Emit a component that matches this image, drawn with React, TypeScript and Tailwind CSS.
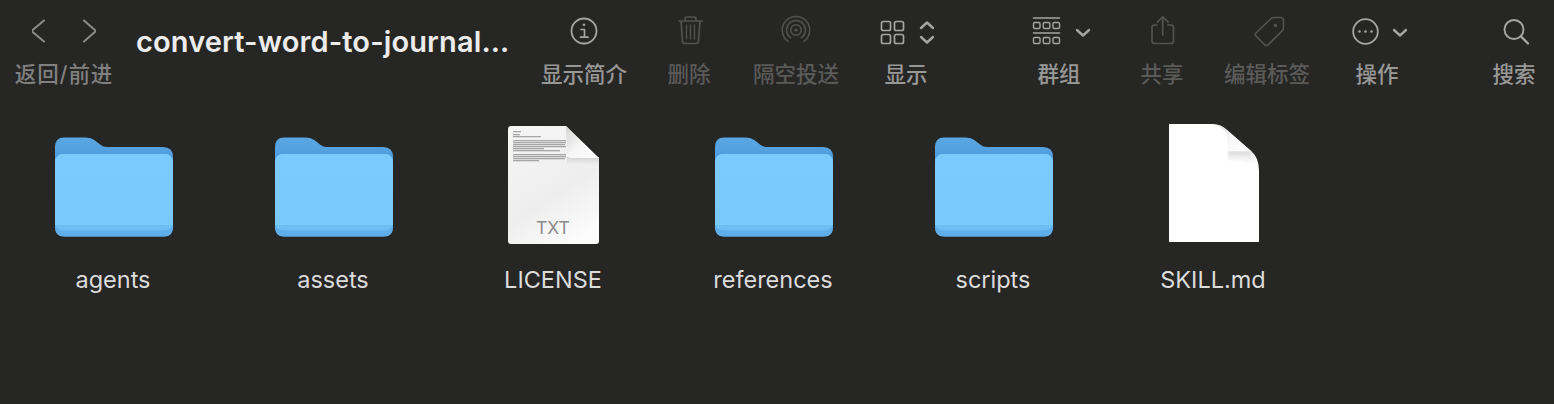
import type { ReactNode } from "react";

// icons are drawn in page coordinates: the viewBox is a 64x32 window around the label's centre
const Glyph = ({ cx, children }: { cx: number; children: ReactNode }) => (
  <svg
    width="64"
    height="32"
    viewBox={`${cx - 32} 15 64 32`}
    fill="none"
    stroke="currentColor"
    strokeLinecap="round"
    strokeLinejoin="round"
    className="shrink-0"
  >
    {children}
  </svg>
);

interface ToolProps {
  label: string;
  cx: number;
  disabled?: boolean;
  className: string;
  children: ReactNode;
}

const Tool = ({ label, cx, disabled, className, children }: ToolProps) => (
  <div className={`flex shrink-0 flex-col items-center ${className}`}>
    <div className={`flex h-8 w-full justify-center ${disabled ? "text-[#525251]" : "text-[#a5a5a4]"}`}>
      <Glyph cx={cx}>{children}</Glyph>
    </div>
    <span
      className={`mt-[11px] text-[21.5px] leading-[32px] font-medium whitespace-nowrap ${disabled ? "text-[#5a5a59]" : "text-[#989897]"}`}
    >
      {label}
    </span>
  </div>
);

const Folder = () => (
  <svg width="124" height="124" viewBox="0 0 124 124">
    <defs>
      <linearGradient id="folderBack" x1="0" y1="0" x2="0" y2="1">
        <stop offset="0" stopColor="#5aa7e3" />
        <stop offset="0.3" stopColor="#4a98da" />
        <stop offset="1" stopColor="#4a98da" />
      </linearGradient>
      <linearGradient id="folderFront" x1="0" y1="0" x2="0" y2="1">
        <stop offset="0" stopColor="#7ccbfe" />
        <stop offset="1" stopColor="#79c9fc" />
      </linearGradient>
    </defs>
    <path
      d="M4 25Q4 15.500 13 15.500H35Q40 15.500 44 18.500L49 22.500Q52 25 56 25H112Q122 25 122 35V105Q122 114.500 113 114.500H13Q4 114.500 4 105Z"
      fill="url(#folderBack)"
    />
    <path d="M4 105V41Q4 32 13 32H113Q122 32 122 41V105Q122 114.500 113 114.500H13Q4 114.500 4 105Z" fill="#5fade9" />
    <path d="M4 100V41Q4 32 13 32H113Q122 32 122 41V100Q122 108.500 113 108.500H13Q4 108.500 4 100Z" fill="#6fbdf5" />
    <path d="M4 103V41Q4 32 13 32H113Q122 32 122 41V103H4Z" fill="url(#folderFront)" />
  </svg>
);

const textLines = [
  [5, 8], [8, 7], [10, 28], [14, 53], [16, 53], [18, 52], [20, 53], [22, 31], [24, 47], [28, 53], [30, 53], [32, 52], [34, 26],
];

const TxtFile = () => (
  <svg width="124" height="124" viewBox="0 0 124 124">
    <defs>
      <linearGradient id="txtPage" x1="0.2" y1="0" x2="0.7" y2="1">
        <stop offset="0" stopColor="#f5f5f5" />
        <stop offset="0.6" stopColor="#eeeeee" />
        <stop offset="1" stopColor="#fcfcfc" />
      </linearGradient>
      <linearGradient id="txtFold" x1="0" y1="0" x2="1" y2="1">
        <stop offset="0" stopColor="#d2d2d2" />
        <stop offset="0.5" stopColor="#f6f6f6" />
        <stop offset="1" stopColor="#ffffff" />
      </linearGradient>
      <linearGradient id="txtShade" x1="0" y1="0" x2="0" y2="1">
        <stop offset="0" stopColor="#cfcfcf" />
        <stop offset="1" stopColor="#efefef" stopOpacity="0" />
      </linearGradient>
      <filter id="txtBlur">
        <feGaussianBlur stdDeviation="0.45" />
      </filter>
    </defs>
    <path d="M17 7Q17 4 20 4H75L108 37V119Q108 122 105 122H20Q17 122 17 119Z" fill="url(#txtPage)" />
    <g filter="url(#txtBlur)">
      {textLines.map(([y, w], i) => (
        <rect key={i} x="22" y={y + 4} width={w} height="1.300" fill="#a6a6a6" />
      ))}
    </g>
    <path d="M76 35H108V46Q92 40 76 42Z" fill="url(#txtShade)" />
    <path d="M75 4L108 36H80Q76 36 76 32Z" fill="url(#txtFold)" />
    <text
      x="62"
      y="112"
      textAnchor="middle"
      fill="#8a8a8a"
      fontSize="17.500"
      fontFamily="Inter, sans-serif"
    >
      TXT
    </text>
  </svg>
);

const BlankFile = () => (
  <svg width="124" height="124" viewBox="0 0 124 124">
    <defs>
      <linearGradient id="blankFold" x1="0" y1="0" x2="1" y2="0.8">
        <stop offset="0" stopColor="#d4d4d4" />
        <stop offset="0.45" stopColor="#f6f6f6" />
        <stop offset="1" stopColor="#ffffff" />
      </linearGradient>
      <linearGradient id="blankShade" x1="0" y1="0" x2="0" y2="1">
        <stop offset="0" stopColor="#d6d6d6" />
        <stop offset="1" stopColor="#ffffff" stopOpacity="0" />
      </linearGradient>
      <filter id="blankBlur">
        <feGaussianBlur stdDeviation="1" />
      </filter>
    </defs>
    <path d="M18 2H62Q70 2 76 8L100 29Q108 36 108 48V120H18Z" fill="#ffffff" />
    <path d="M77 29H99Q105 35 107 46Q94 37 77 38Z" fill="url(#blankShade)" filter="url(#blankBlur)" />
    <path d="M66 3Q71 4 76 8L100 29H82Q76 29 76 24V15Q75 8 66 3Z" fill="url(#blankFold)" />
  </svg>
);

const items = [
  { name: "agents", icon: <Folder /> },
  { name: "assets", icon: <Folder /> },
  { name: "LICENSE", icon: <TxtFile /> },
  { name: "references", icon: <Folder /> },
  { name: "scripts", icon: <Folder /> },
  { name: "SKILL.md", icon: <BlankFile /> },
];

export default function App() {
  return (
    <div className="h-[404px] w-full overflow-hidden bg-[#262625] font-['Inter','Noto_Sans_CJK_SC',sans-serif]">
      <div className="flex h-[100px] items-start pt-[15px]">
        <div className="ml-[15px] flex w-[98px] shrink-0 flex-col items-center">
          <div className="flex h-8 w-full justify-center text-[#8b8b8a]">
            <Glyph cx={64}>
              <path d="M44 20.500L31.500 31L44 41.500" strokeWidth="2" />
              <path d="M84 20.500L96 31L84 41.500" strokeWidth="2" />
            </Glyph>
          </div>
          <span className="mt-[11px] text-[21.500px] leading-[32px] font-medium tracking-[0.9px] whitespace-nowrap text-[#808080]">
            返回/前进
          </span>
        </div>

        <h1 className="mt-[10px] ml-[23px] w-[374px] shrink-0 text-[29px] leading-[34px] font-semibold tracking-[0.12px] whitespace-nowrap text-[#ececec]">
          convert-word-to-journal...
        </h1>

        <Tool label="显示简介" cx={584} className="ml-[30px] w-[88px]">
          <circle cx="584" cy="31" r="12.500" strokeWidth="1.800" />
          <circle cx="584" cy="24.800" r="1.300" fill="currentColor" stroke="none" />
          <path d="M581 29.500H584.500V37M580.500 37.200H588" strokeWidth="1.700" />
        </Tool>
        <Tool label="删除" cx={689} disabled className="ml-[39px] w-[44px]">
          <path d="M679 21H702M685 21V19Q685 17 687 17H694Q696 17 696 19V21" strokeWidth="1.700" />
          <path d="M681 21L682.500 41Q682.700 43.500 685 43.500H696Q698.300 43.500 698.500 41L700 21" strokeWidth="1.700" />
          <path d="M686.500 25V39M690.500 25V39M694.500 25V39" strokeWidth="1.300" />
        </Tool>
        <Tool label="隔空投送" cx={796} disabled className="ml-[41px] w-[88px]">
          <circle cx="796" cy="30" r="1.600" fill="currentColor" stroke="none" />
          <circle cx="796" cy="30" r="5.300" strokeWidth="1.500" />
          <path d="M790.600 37.800A9.500 9.500 0 1 1 801.400 37.800" strokeWidth="1.500" />
          <path d="M788.100 41.300A13.700 13.700 0 1 1 803.900 41.300" strokeWidth="1.500" />
        </Tool>
        <Tool label="显示" cx={906} className="ml-[44px] w-[44px]">
          <rect x="881.500" y="21.500" width="9" height="9" rx="1.800" strokeWidth="1.700" />
          <rect x="894.500" y="21.500" width="9" height="9" rx="1.800" strokeWidth="1.700" />
          <rect x="881.500" y="34.500" width="9" height="9" rx="1.800" strokeWidth="1.700" />
          <rect x="894.500" y="34.500" width="9" height="9" rx="1.800" strokeWidth="1.700" />
          <path d="M921 28L927 22.500L933 28M921 37L927 42.500L933 37" strokeWidth="2.400" />
        </Tool>
        <Tool label="群组" cx={1059} className="ml-[109px] w-[44px]">
          <path d="M1033.500 18H1059.500M1033.500 33H1059.500" strokeWidth="1.500" />
          <rect x="1033.500" y="22.500" width="6.500" height="6" rx="1.200" strokeWidth="1.400" />
          <rect x="1043.300" y="22.500" width="6.500" height="6" rx="1.200" strokeWidth="1.400" />
          <rect x="1053" y="22.500" width="6.500" height="6" rx="1.200" strokeWidth="1.400" />
          <rect x="1033.500" y="37.500" width="6.500" height="6" rx="1.200" strokeWidth="1.400" />
          <rect x="1043.300" y="37.500" width="6.500" height="6" rx="1.200" strokeWidth="1.400" />
          <rect x="1053" y="37.500" width="6.500" height="6" rx="1.200" strokeWidth="1.400" />
          <path d="M1077 30L1083 35.500L1089 30" strokeWidth="2.400" />
        </Tool>
        <Tool label="共享" cx={1162} disabled className="ml-[59px] w-[44px]">
          <path d="M1157 25H1154.500Q1152 25 1152 27.500V41Q1152 43.500 1154.500 43.500H1171Q1173.500 43.500 1173.500 41V27.500Q1173.500 25 1171 25H1168" strokeWidth="1.700" />
          <path d="M1162.700 35V17M1157.500 22L1162.700 16.800L1168 22" strokeWidth="1.700" />
        </Tool>
        <Tool label="编辑标签" cx={1267} disabled className="ml-[39px] w-[88px]">
          <path d="M1255.500 33.500L1271 18.500Q1272 17.500 1274 17.500H1280.500Q1283.500 17.500 1283.500 20.500V27.500Q1283.500 29.500 1282.500 30.500L1268 45Q1266.500 46 1265 45L1255.500 35.500Q1254.800 34.500 1255.500 33.500Z" strokeWidth="1.700" />
          <circle cx="1275.500" cy="25.500" r="1.800" fill="currentColor" stroke="none" />
        </Tool>
        <Tool label="操作" cx={1377} className="ml-[44px] w-[44px]">
          <circle cx="1365.500" cy="31.500" r="12.300" strokeWidth="1.800" />
          <circle cx="1359.500" cy="31.500" r="1.300" fill="currentColor" stroke="none" />
          <circle cx="1365.500" cy="31.500" r="1.300" fill="currentColor" stroke="none" />
          <circle cx="1371.500" cy="31.500" r="1.300" fill="currentColor" stroke="none" />
          <path d="M1394 30L1400 35.500L1406 30" strokeWidth="2.400" />
        </Tool>
        <Tool label="搜索" cx={1514} className="ml-[93px] w-[44px]">
          <circle cx="1514" cy="29.500" r="9.500" strokeWidth="1.900" />
          <path d="M1521 36.500L1528 43.500" strokeWidth="2.300" />
        </Tool>
      </div>

      <div className="mt-[22px] flex pl-[3px]">
        {items.map((item) => (
          <div key={item.name} className="flex w-[220px] shrink-0 flex-col items-center">
            {item.icon}
            <span className="mt-[19px] text-[23.500px] leading-[30px] text-[#dcdcdb]">{item.name}</span>
          </div>
        ))}
      </div>
    </div>
  );
}
